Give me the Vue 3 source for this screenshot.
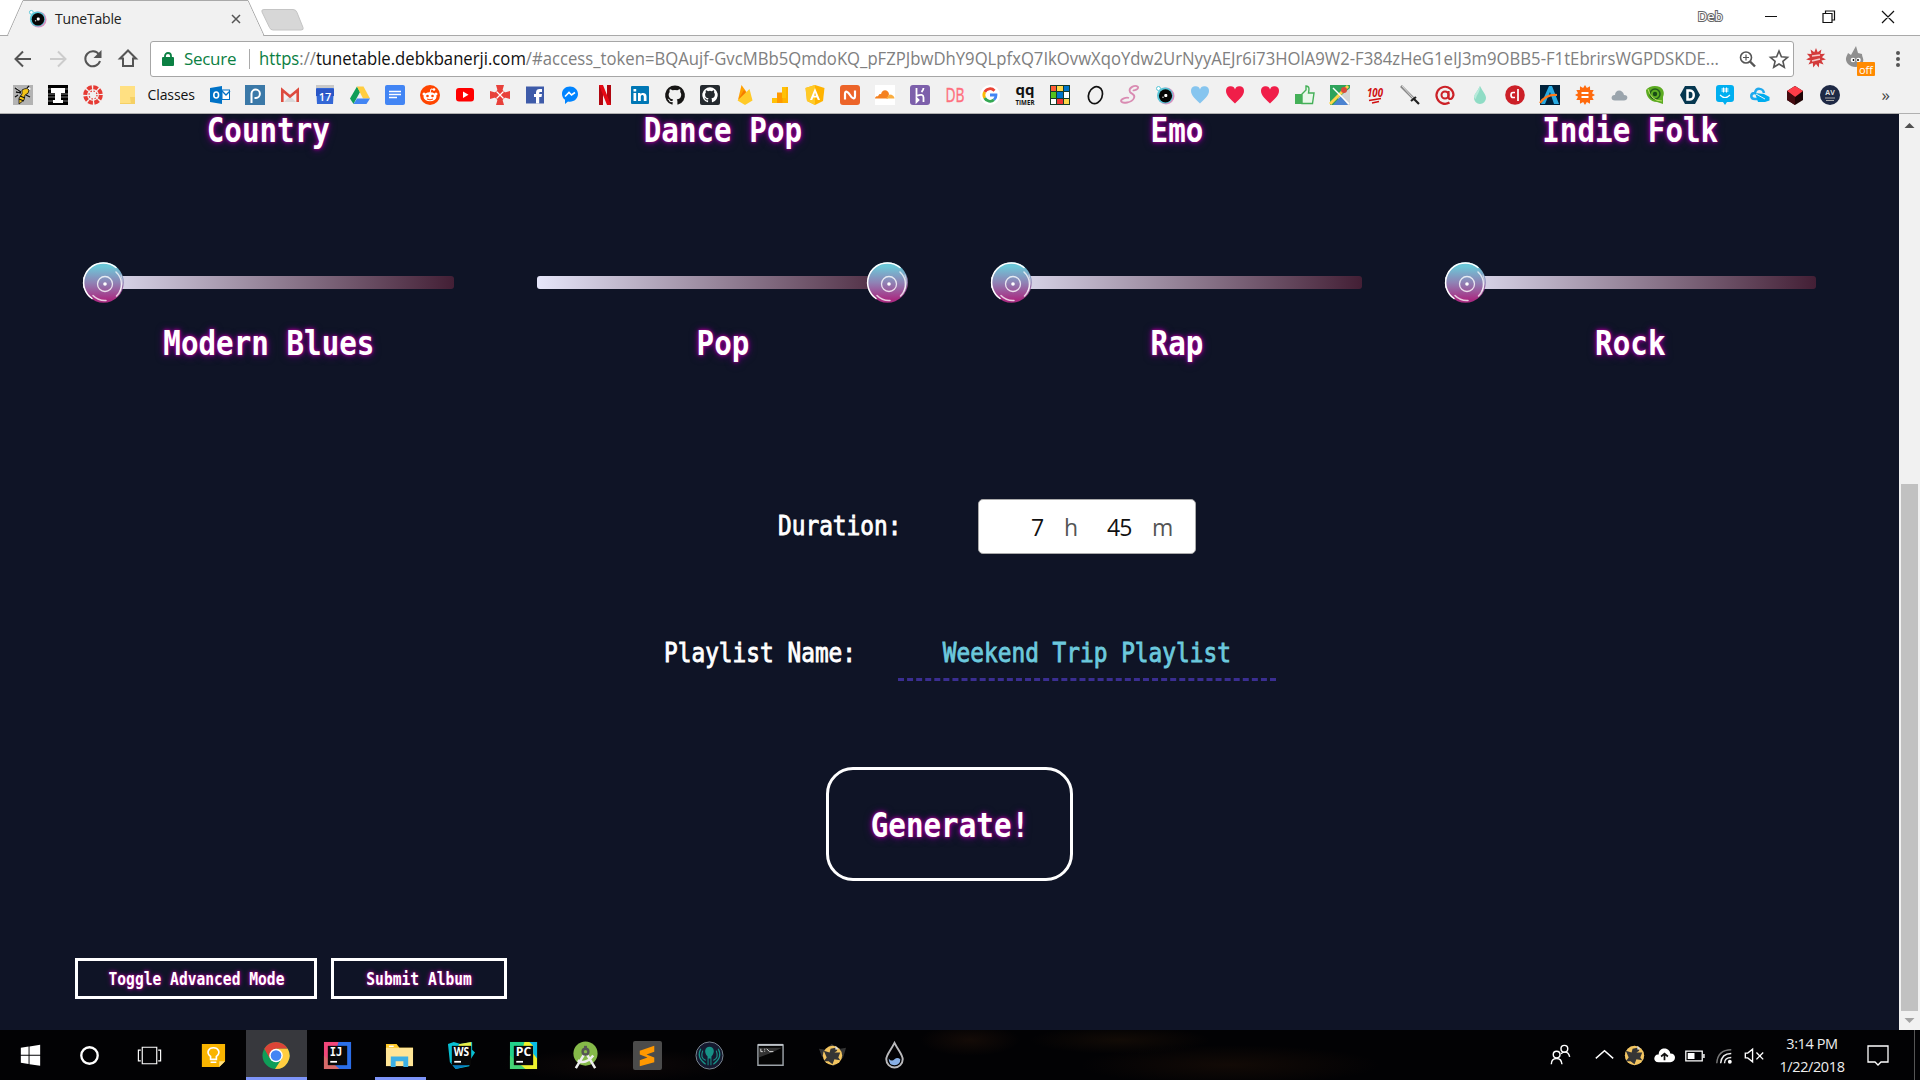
<script setup>
const heart = (c) => `<path fill="${c}" d="M10 18.500C6 14.500 1 10.500 1 6A4.600 4.600 0 0 1 10 4.500A4.600 4.600 0 0 1 19 6C19 10.500 14 14.500 10 18.500Z"/>`
const cat = (c) => `<path fill="${c}" d="M10 1.500a8.500 8.500 0 0 0-2.700 16.600c.4.1.6-.2.6-.5v-1.700c-2.400.5-2.900-1-2.900-1-.4-1-1-1.300-1-1.300-.8-.5.1-.5.1-.5.9.1 1.300.9 1.300.9.8 1.300 2 1 2.500.7.1-.5.300-.9.500-1.100-1.900-.2-3.900-1-3.900-4.200 0-1 .3-1.700.9-2.300-.1-.3-.4-1.100.1-2.300 0 0 .7-.2 2.300.9a8 8 0 0 1 4.300 0c1.600-1.100 2.300-.9 2.300-.9.5 1.200.2 2 .1 2.300.6.6.9 1.400.9 2.300 0 3.300-2 4-3.900 4.200.3.300.6.800.6 1.600v2.400c0 .3.200.6.600.5A8.500 8.500 0 0 0 10 1.500Z"/>`
const tune = `<circle cx="11" cy="11" r="8.500" fill="#d98fc0"/><circle cx="10" cy="10.500" r="8" fill="#58c7d8"/><circle cx="10.500" cy="10.800" r="6.600" fill="#050505"/><circle cx="3.500" cy="3.500" r="2" fill="#fff" stroke="#58c7d8"/><rect x="9.300" y="9" width="3" height="3" rx="1" fill="#fff"/><circle cx="8" cy="12.300" r=".8" fill="#ccc"/>`
const spikes = (n, r1, r2) => Array.from({ length: n * 2 }, (_, i) => {
  const a = (i * Math.PI) / n, r = i % 2 ? r2 : r1
  return `${(10 + r * Math.sin(a)).toFixed(2)},${(10 - r * Math.cos(a)).toFixed(2)}`
}).join(' ')

const leading = [
  `<path fill="#b3b3b3" d="M0 0h20v20H0z"/><path fill="#f2f2f2" d="M3 2l7 6-5 1zM15 1l3 3-6 4z"/><path fill="#f5c518" stroke="#111" stroke-width=".8" d="M9 5q5-3 7 0 0 4-4 5l-1 5-5 4 0-6 3-4z"/><path stroke="#111" stroke-width="1.300" d="M2 3l6 4M3 7l5 1M7 11l5 2M6 14l5 2M14 3l2-2M13 10l4 2M5 10l-3 2"/>`,
  `<path fill="#000" d="M0 0h20v20H0z"/><path stroke="#777" stroke-width="1" d="M0 4h20M0 9h20M0 12h20M0 16h20"/><path fill="#fff" d="M3 3h14v5h-4v7h2v3H5v-3h2V8H3z"/>`,
  `<circle cx="10" cy="10" r="7.800" fill="none" stroke="#e63b34" stroke-width="4" stroke-dasharray="4.700 1.430"/><circle cx="10" cy="10" r="4" fill="none" stroke="#e63b34" stroke-width="1.300" stroke-dasharray="1.400 1.750"/>`,
  `<path fill="#ffe082" d="M2 1h15v18H2z"/><path fill="#f5d064" d="M12 12h5v7h-4zM2 18h11v1H2z"/>`
]

const bookmarks = [
  `<path fill="#0072c6" d="M0 3l12-2v18L0 17z"/><rect x="12" y="5" width="7.500" height="9.500" fill="#fff" stroke="#0072c6"/><path d="M12 6l4 4 4-4" fill="none" stroke="#0072c6" stroke-width="1.300"/><ellipse cx="6.200" cy="10" rx="2.400" ry="3" fill="none" stroke="#fff" stroke-width="1.600"/>`,
  `<path fill="#3b79a8" d="M0 0h20v20H0z"/><path d="M6.500 18V8.500a4.200 4.200 0 1 1 4.500 4.500H9.500" fill="none" stroke="#fff" stroke-width="2"/>`,
  `<path fill="#f2f2f2" d="M2 4h16v13H2z"/><path fill="#d9d9d9" d="M4 17l6-6 6 6z"/><path d="M2.300 17V5L10 11.500 17.700 5v12" fill="none" stroke="#dd4b3e" stroke-width="2.600"/>`,
  `<path fill="#3367d6" d="M1 1h18l-1 18H2z"/><path fill="#c8c8c8" d="M1 0h18v3H1z"/><path fill="#2a56c6" d="M1 4h18v7H1z"/><text x="10" y="15.500" font-size="11" font-weight="600" fill="#fff" text-anchor="middle">17</text>`,
  `<path fill="#0f9d58" d="M7 1.500L0 13.500l3.500 5.500L10 7z"/><path fill="#ffcd40" d="M7 1.500h6.500l6.500 12h-7z"/><path fill="#4285f4" d="M7 13.500h13L16.500 19h-13z"/>`,
  `<rect width="20" height="20" rx="2" fill="#4285f4"/><path stroke="#fff" stroke-width="1.500" d="M4 6.500h12M4 9.500h12M4 12.500h8"/>`,
  `<circle cx="10" cy="10" r="10" fill="#ff4500"/><ellipse cx="10" cy="11.800" rx="6.500" ry="4.500" fill="#fff"/><circle cx="4" cy="9" r="1.500" fill="#fff"/><circle cx="16" cy="9" r="1.500" fill="#fff"/><circle cx="14" cy="4.500" r="1.300" fill="#fff"/><path d="M10 8l1-4 3 .5" fill="none" stroke="#fff"/><circle cx="7.500" cy="11" r="1.300" fill="#ff4500"/><circle cx="12.500" cy="11" r="1.300" fill="#ff4500"/><path d="M7 14q3 1.600 6 0" fill="none" stroke="#ff4500"/>`,
  `<rect x="1" y="3" width="18" height="13.500" rx="3" fill="#f00"/><path fill="#fff" d="M8 6.500l5.500 3.300L8 13z"/>`,
  `<g fill="#e8413a"><path d="M6 0h8l-2 7H8zM6 20h8l-2-7H8zM0 6v8l7-2V8zM20 6v8l-7-2V8z"/><path d="M10 2.500l7.500 7.500-7.500 7.500L2.500 10z"/></g><path stroke="#fff" stroke-width="1.200" d="M6.500 6.500l7 7M13.500 6.500l-7 7"/>`,
  `<path fill="#3e5ba9" d="M1 1.500h18v17H1z"/><path fill="#fff" d="M11 18.500V12H9V9h2V7.500C11 5 12.500 4 14.500 4H17v3h-1.500c-1 0-1.300.4-1.300 1.200V9H17l-.5 3h-2.300v6.500z"/>`,
  `<path fill="#0084ff" d="M10 1.500c-5 0-8 3.300-8 7.500 0 2.500 1.200 4.500 3 5.800V19l3-2.500c5.500 1 10-2.500 10-7.500 0-4.200-3.500-7.500-8-7.500z"/><path d="M5 11.500l4-4 2.500 2.500L15 7.500" fill="none" stroke="#fff" stroke-width="1.600"/>`,
  `<path fill="#b00710" d="M4 0h4v20H4zM12 0h4v20h-4z"/><path fill="#e50914" d="M4 0h4l8 20h-4z"/>`,
  `<rect x="1" y="1" width="18" height="18" rx="1" fill="#0077b5"/><path fill="#fff" d="M3.500 8h2.700v8H3.500zM3.500 4h2.700v2.500H3.500zM8 8h2.500v1.200c1-1.900 6-2 6 2V16h-2.700v-4.300c0-2.200-3-2-3 0V16H8z"/>`,
  `<g transform="translate(-1.500 -1.200) scale(1.150)">${cat('#161514')}</g>`,
  `<rect width="20" height="20" rx="2" fill="#24292e"/><g transform="translate(1 1) scale(.9)">${cat('#fff')}</g>`,
  `<path fill="#ffa000" d="M3 15L6.500 0l5 7z"/><path fill="#f57c00" d="M3 15l6-10 3 4z"/><path fill="#ffca28" d="M2.500 15.500L14.500 4l3 11.500L10 20z"/>`,
  `<path fill="#ffb300" d="M12 2h6v16h-6z"/><path fill="#ff9800" d="M7 7.500h5.500V18H7z"/><path fill="#ffc107" d="M2 13h5v5H2zM12 2h4v11h-4z"/>`,
  `<path fill="#ffb300" d="M10 0l9.500 3-1.500 13-8 4-8-4L.5 3z"/><path fill="#ffca28" d="M10 0v20l-8-4L.5 3z"/><path fill="#fff" fill-rule="evenodd" d="M10 3l5 12h-2.200l-1-2.500H8.200l-1 2.500H5zm0 4.500L9 10.700h2z"/>`,
  `<rect width="20" height="20" rx="3" fill="#ec6429"/><path d="M5 14.500V9c0-4 3-2.500 5 1s5 5 5 1V5.500" fill="none" stroke="#fff" stroke-width="2.200"/>`,
  `<path fill="#fff" d="M0 0h20v20H0z"/><path fill="#f48120" d="M0 13.500c0-2 2-2.500 3-2.200C4 9 5 8.800 6 9.200 7 4 13 4 14 9l-1 4.500z"/><path fill="#faad3f" d="M11 13.500l3.500-4c3 0 5 2 5 4z"/>`,
  `<rect width="20" height="20" rx="3" fill="#7d60ab"/><path d="M6.500 3v8q7-3 7 1.500V17M13.500 3q0 2-2 4M6.500 17v-4l2 2z" fill="none" stroke="#fff" stroke-width="1.800"/>`,
  `<text x="10" y="17" font-size="20" fill="#ff6f7d" stroke="#ff6f7d" stroke-width=".4" text-anchor="middle" textLength="19" lengthAdjust="spacingAndGlyphs">DB</text>`,
  `<circle cx="10" cy="10" r="10" fill="#fff"/><g fill="none" stroke-width="2.800"><path stroke="#ea4335" d="M14.500 5.700A6 6 0 0 0 4.700 7"/><path stroke="#fbbc05" d="M4.700 7a6 6 0 0 0 0 6"/><path stroke="#34a853" d="M4.700 13a6 6 0 0 0 9.300 1.800"/><path stroke="#4285f4" d="M14 14.800A6 6 0 0 0 16 10h-6"/></g>`,
  `<text x="10" y="10" font-size="15" font-weight="700" fill="#111" text-anchor="middle">qq</text><text x="10" y="19.500" font-size="6.500" font-weight="700" fill="#111" text-anchor="middle" textLength="19" lengthAdjust="spacingAndGlyphs">TIMER</text>`,
  `<path fill="#163b2a" d="M0 0h20v20H0z"/><path fill="#ff5c35" d="M1 1h5v5H1z"/><path fill="#ffd84a" d="M7 1h6v5H7zM14 14h5v5h-5z"/><path fill="#0074c8" d="M14 1h5v5h-5zM7 7h6v6H7z"/><path fill="#55c21c" d="M1 7h5v6H1z"/><path fill="#fff" d="M14 7h5v6h-5zM1 14h5v5H1z"/><path fill="#e33" d="M7 14h6v5H7z"/>`,
  `<ellipse cx="10.500" cy="10" rx="6.800" ry="8.700" fill="none" stroke="#111" stroke-width="1.700" transform="rotate(22 10 10)"/>`,
  `<path d="M13 5c1 1 6-1 5-3-3-3-10 1-8 5 1 2 6 2 4 6-2 5-12 6-13 3 0-2 5-4 8-3" fill="none" stroke="#d98bb2" stroke-width="1.800"/>`,
  tune, heart('#86c5ef'), heart('#f01e49'), heart('#f01e49'),
  `<path fill="#44b058" d="M0 9h7v10H0z"/><path d="M7 9l4-4V1c4 0 3 4 2.500 7H19l-1.500 10.500H7z" fill="#e9f7ea" stroke="#44b058" stroke-width="1.400"/>`,
  `<path fill="#2fa35b" d="M0 0h20v20H0z"/><path fill="#d5d5d5" d="M20 3v17H13L8 13z"/><path fill="#4b83d1" d="M3 20l8-9 7 9z"/><path d="M0 19L18 1" stroke="#ffd54a" stroke-width="3"/><path d="M3 3l16 16" stroke="#fff" stroke-width="1.500"/><circle cx="14" cy="5" r="3" fill="#d94a39"/>`,
  `<text x="10" y="11.500" font-size="13" font-style="italic" font-weight="700" fill="#d01012" text-anchor="middle" textLength="16" lengthAdjust="spacingAndGlyphs">100</text><path d="M4 15.500l12-2M7 18l7-1.500" stroke="#d01012" stroke-width="1.500"/>`,
  `<path d="M1 1l13 13" stroke="#888" stroke-width="2.600"/><path d="M2 1l11 12" stroke="#ddd"/><path d="M11 16l5-4M14 14l5 5" stroke="#222" stroke-width="2.200"/>`,
  `<circle cx="10" cy="10" r="3.500" fill="none" stroke="#cc2228" stroke-width="2"/><path d="M13.500 6v6q0 2 2 2t3-4a8.500 8.500 0 1 0-4 7.500" fill="none" stroke="#cc2228" stroke-width="2.200"/>`,
  `<path fill="#8fdcc5" d="M10 1c3 6 6 8.500 6 12a6 6 0 0 1-12 0c0-3.500 3-6 6-12z"/><path fill="#b8eadb" d="M10 1c0 7-4 9-4 13a5 5 0 0 1-2-2c0-3 4-6 6-11z"/>`,
  `<circle cx="10" cy="10" r="9.800" fill="#cc2028"/><path d="M10 7.500H8q-2 0-2 2.500t2 2.500h2M13 4v12" fill="none" stroke="#fff" stroke-width="1.700"/>`,
  `<path fill="#00213a" d="M0 0h20v20H0z"/><path fill="#29abe2" d="M9 1h3l7 18h-5l-4-12-5 12H1z"/><path d="M0 18q6-9 17-8" fill="none" stroke="#ff7a1a" stroke-width="2.200"/>`,
  `<polygon points="${spikes(12, 10, 7.2)}" fill="#ff6a0d"/><path d="M6.500 8h7M6.500 12h7" stroke="#fff" stroke-width="1.800"/>`,
  `<path fill="#9ba5ad" d="M5 15.500c-5 0-4-6 0-5.500 0-6 8-6 9 0 5 0 4 5.500 0 5.500z"/>`,
  `<path fill="#5cab22" d="M1 5c3-4 9-5 14-3 5 3 4 8 3 10v7l-6-2C5 17 1 11 1 5z"/><circle cx="10" cy="9" r="5" fill="none" stroke="#225c1c" stroke-width="1.500"/><circle cx="10" cy="9" r="2.200" fill="#184b17"/><path d="M3 4q3 12 14 12" fill="none" stroke="#bde36a"/>`,
  `<path fill="#063750" d="M5 1h10l5 9-5 9H5L0 10z"/><path d="M7.500 5.500H10c5 0 5 9 0 9H7.500z" fill="none" stroke="#fff" stroke-width="2.500"/>`,
  `<path fill="#00aff0" d="M4 0h12q3 0 3 3v11q0 3-3 3h-4l-2 3-2-3H4q-3 0-3-3V3q0-3 3-3z"/><path d="M8.500 2.500v5M11.500 2.500v5M6.500 4h7M6.500 6h7M5 10q5 5 10 0" fill="none" stroke="#fff" stroke-width="1.100"/>`,
  `<path d="M9 14H5C0 14 0 8 5 8c1-6 8-5 9 0" fill="none" stroke="#20a9ed" stroke-width="2.500"/><path fill="#00adef" d="M5 8l9 1 5.500 3v3.500L15 17H8z"/><path d="M6 9l9 5" stroke="#f1f1f1"/>`,
  `<path fill="#1f0506" d="M2 6l8-5 8 5v9l-8 5-8-5z"/><path fill="#ff3d48" d="M2 6l8-5 8 5-8 6z"/><path fill="#450b10" d="M2 6l8 6v8l-8-5z"/>`,
  `<circle cx="10" cy="10" r="10" fill="#1e2945"/><text x="10" y="10" font-size="7" font-weight="700" fill="#ddd" text-anchor="middle">AV</text><path d="M5 13h10M6 15.500h8" stroke="#aaa"/>`
]

const jet = (a, b, c) => `<path fill="${a}" d="M1 1h28v28H1z"/><path fill="${b}" d="M16 1h13v28H8z"/><path fill="${c}" d="M1 15l16 14H1z"/><path fill="#080808" d="M5 5h20v20H5z"/>`
const label = (t, w = 16, f = '') => `<text x="7" y="16" font-size="12" font-weight="700" ${f} fill="#fff" textLength="${w}" lengthAdjust="spacingAndGlyphs">${t}</text><path d="M7.500 21.500h7" stroke="#fff" stroke-width="1.800"/>`
const bird = `<circle cx="15" cy="15" r="10" fill="#f3c560"/><path fill="#353535" d="M6 10l6 2 1-4 5-1 2 3-3 2 6 0-2 5 2 3-6-1-2 5-4-3-5 0 3-4z"/><path fill="#ddd" d="M18 5l3 3-3 1z"/>`

const apps = [
  { w: 60, svg: `<path fill="#fff" d="M5 7l8-1.200V14.300H5zM14 5.600l11-1.600v10.300H14zM5 15.300h8v8.500L5 22.600zM14 15.300h11V25.500L14 24z"/>` },
  { w: 59, svg: `<circle cx="15" cy="15" r="8.500" fill="none" stroke="#fff" stroke-width="2.400"/>` },
  { w: 60, svg: `<path d="M7.500 6.500h15v17h-15zM6 9.500H3.500v11H6M24 9.500h2.500v11H24" fill="none" stroke="#fff" stroke-width="1.200"/>` },
  { w: 67, svg: `<path fill="#f9b400" d="M4 3h24v18l-6 6H4z"/><path fill="#ffe082" d="M22 27v-6h6z"/><path d="M13 19v-3c-5-4-2-9 3-9s8 5 3 9v3zM13 22h6" fill="none" stroke="#fff" stroke-width="1.700"/>` },
  { w: 61, active: true, svg: `<circle cx="14.500" cy="15" r="14" fill="#0f9d58"/><path fill="#db4437" d="M2.400 8A14 14 0 0 1 26.600 8H14.500v9H7.500z"/><path fill="#ffcd40" d="M14.500 8h12.100A14 14 0 0 1 13.500 29l7-11z"/><circle cx="14.500" cy="15" r="7" fill="#fff"/><circle cx="14.500" cy="15" r="5.500" fill="#4285f4"/>` },
  { w: 61, svg: jet('#f2477a', '#2b6fe8', '#d76a6a') + label('IJ', 13, 'font-family="DejaVu Sans Mono"') },
  { w: 62, open: true, svg: `<path fill="#ffc928" d="M1 3h11l3 4h14v6H1z"/><path fill="#ffe596" d="M1 7h28v19H1z"/><path fill="#3cb0e5" d="M6 27V16h18v11h-5v-6h-8v6z"/><path stroke="#fff" stroke-width="1.500" d="M4 5.500h5"/>` },
  { w: 62, svg: `<path fill="#08bfd2" d="M1 3l6-2 7 2 12-2v8l3 3-4 6-2 8-14 3-6-7z"/><path fill="#e8ee48" d="M13 3l12-2v5H11z"/><path fill="#087cbf" d="M4 22l7-2 12 5-14 4z"/><path fill="#080808" d="M5 5h20v20H5z"/>` + label('WS') },
  { w: 62, svg: jet('#22d28a', '#eef22d', '#46d475') + `<path fill="#08bce6" d="M21 1h8v17l-4-5V5z"/>` + label('PC') },
  { w: 62, svg: `<circle cx="15" cy="13" r="12.500" fill="#85b949"/><path d="M14 13L5 28M16 13l9 15M7 20q8 5 16-5" fill="none" stroke="#eee" stroke-width="2.600"/><circle cx="15" cy="11" r="3" fill="none" stroke="#555" stroke-width="2.500"/><path d="M15 5v4" stroke="#555" stroke-width="3"/>` },
  { w: 62, svg: `<rect width="30" height="30" rx="2" fill="#4b4b4b"/><path fill="#ff9800" d="M7 10l15-5v6l-8 3 8 3v5L7 26v-6l8-3-8-3z"/>` },
  { w: 62, svg: `<circle cx="15" cy="15" r="14" fill="#151a30" stroke="#7c8993"/><path fill="#179287" d="M15 6c-5 0-6 6-2 10v9h1v-7h2v7h1v-9c4-4 3-10-2-10z"/><path d="M6 8q-5 9 5 16M24 8q5 9-5 16M8 10q-3 8 3 10M22 10q3 8-3 10" fill="none" stroke="#179287" stroke-width="1.200"/>` },
  { w: 61, svg: `<path fill="#050505" stroke="#9ca2a8" stroke-width="1.500" d="M2 4h26v21H2z"/><path fill="#333" d="M3 7h24L14 13l-11 4z"/><path stroke="#bdc2c8" stroke-width="2" d="M2 4h26"/><path d="M5 8v3h2M9 8v1M9 10v1M11 8l3 3h4" fill="none" stroke="#ddd"/>` },
  { w: 62, svg: `<path fill="#343434" d="M1 8l7 1 6-6 9 5 6-1-3 10-10 9L4 16z"/>` + bird },
  { w: 62, svg: `<path d="M15 2c4 8 8.500 12 8.500 17a8.500 8.500 0 0 1-17 0C6.500 14 11 10 15 2z" fill="none" stroke="#b9b9bc" stroke-width="2"/><path fill="#88afe5" d="M9 18q3 4 6 1t6 0q0 6-6 6t-6-7z"/>` }
]

const tray = [
  { w: 60, svg: `<g fill="none" stroke="#fff" stroke-width="1.500"><circle cx="11" cy="14" r="3.500"/><path d="M5.500 24q0-6 5.500-6 5 0 5.500 6"/><circle cx="19" cy="8" r="3.500"/><path d="M15.500 13q2-1.500 4-1.500 4 0 5 5"/></g>` },
  { w: 29, svg: `<path d="M6 18l9-8 9 8" fill="none" stroke="#fff" stroke-width="1.500"/>` },
  { w: 30, svg: `<circle cx="15" cy="15" r="10" fill="#555"/>` + bird },
  { w: 30, svg: `<path fill="#fff" d="M9 22C2 22 4 13 9 14c0-8 11-8 12-1 7 0 6 9 0 9z"/><path d="M15 20v-6M11.500 16l3.500-3 3.500 3" fill="none" stroke="#111" stroke-width="1.800"/>` },
  { w: 30, svg: `<path d="M6 10.500h17v10H6z" fill="none" stroke="#fff" stroke-width="1.300"/><path fill="#fff" d="M8 12.500h7v6H8zM24 13.500h1.500v4H24z"/>` },
  { w: 31, svg: `<g fill="none" stroke-width="1.500"><path stroke="#777" d="M7 23Q8 9 22 9"/><path stroke="#eee" d="M11 23q1-10 11-10M15 23q0-6 7-6"/></g><circle cx="20.500" cy="21.500" r="2" fill="#fff"/>` },
  { w: 28, svg: `<path d="M5.500 12.500H8l5-4v13l-5-4H5.500zM17 12l7 7M24 12l-7 7" fill="none" stroke="#fff" stroke-width="1.400"/>` }
]

const topGenres = ['Country', 'Dance Pop', 'Emo', 'Indie Folk']
const genres = [
  { name: 'Modern Blues', value: 0 },
  { name: 'Pop', value: 100 },
  { name: 'Rap', value: 0 },
  { name: 'Rock', value: 0 }
]
const query = '/#access_token=BQAujf-GvcMBb5QmdoKQ_pFZPJbwDhY9QLpfxQ7IkOvwXqoYdw2UrNyyAEJr6i73HOlA9W2-F384zHeG1eIJ3m9OBB5-F1tEbrirsWGPDSKDE...'
</script>

<template>
  <div class="screen">
    <header class="tabs">
      <svg class="tabshape" width="310" height="36" viewBox="0 0 310 36">
        <path d="M0 35.500H7.500L23 .5H248L264 35.500H310" fill="none" stroke="#a9a9a9" />
        <path d="M8 36L23.500 1H247.500L263.500 36z" fill="#f1f1f1" />
        <path d="M264 9.500h29q3 0 4 3l6 15q1 2.500-2 2.500H273q-2.500 0-3.500-2.500L262 12q-1-2.500 2-2.500z" fill="#d7d7d7" stroke="#c4c4c4" />
      </svg>
      <div class="tabbody">
        <svg class="fav" viewBox="0 0 20 20" v-html="tune"></svg>
        <span class="tabname">TuneTable</span>
        <svg class="tabclose" width="10" height="10" viewBox="0 0 10 10"><path d="M1 1l8 8M9 1L1 9" stroke="#555" stroke-width="1.500" /></svg>
      </div>
      <div class="window">
        <span class="deb">Deb</span>
        <svg width="180" height="36" viewBox="0 0 180 36" fill="none" stroke="#111" stroke-width="1.200">
          <path d="M25 16.500h12M83 13.500h9v9h-9zM85.500 13.500V11h9v9H92M142 11l12 12M154 11l-12 12" />
        </svg>
      </div>
    </header>

    <div class="toolbar">
      <svg class="nav" width="150" height="44" viewBox="0 0 150 44" fill="none" stroke="#555" stroke-width="2">
        <path d="M31 23H16M23 15.500L15.500 23l7.500 7.500" />
        <path stroke="#ccc" d="M50 23h15M58 15.500l7.500 7.500-7.500 7.500" />
        <path d="M99 18.500A7.500 7.500 0 1 0 100 25" /><path fill="#555" stroke="none" d="M101.500 14v8h-8z" />
        <path d="M120 22.500l8-8 8 8h-3V30h-10v-7.500z" />
      </svg>
      <div class="omnibox">
        <svg class="lock" width="12" height="16" viewBox="0 0 12 16"><path d="M3 7V5a3 3 0 0 1 6 0v2" fill="none" stroke="#0b8043" stroke-width="1.800" /><rect y="6" width="12" height="9" rx="1" fill="#0b8043" /></svg>
        <span class="secure">Secure</span>
        <i class="bar"></i>
        <svg class="url" width="1464" height="34">
          <text x="0" y="23" textLength="1460" lengthAdjust="spacingAndGlyphs"><tspan fill="#0b8043">https</tspan><tspan fill="#808080">://</tspan><tspan fill="#111">tunetable.debkbanerji.com</tspan><tspan fill="#808080">{{ query }}</tspan></text>
        </svg>
        <svg class="tools" width="60" height="32" viewBox="0 0 60 32" fill="none" stroke="#555" stroke-width="1.600">
          <circle cx="13" cy="14.500" r="5.500" /><path d="M17 18.500l5 5" stroke-width="2.400" /><path d="M10 14.500h6M13 11.500v6" stroke-width="1.200" />
          <path d="M46 8l2.400 5.800 6.100.5-4.600 4 1.400 6-5.300-3.300-5.300 3.300 1.400-6-4.600-4 6.100-.5z" />
        </svg>
      </div>
      <svg class="ext" width="126" height="44" viewBox="0 0 126 44">
        <g transform="translate(12 12)"><polygon :points="spikes(11, 10, 6)" fill="#d33b3b" /><path d="M6 8l8-1M6 13l8-2" stroke="#f6caca" stroke-width="1.700" /></g>
        <path fill="#8f8f8f" d="M54 28c-4-5-1-8 0-11l3 2 5-9 2 7 4 1c0 4 3 5 0 10-3 4-10 4-14 0z" /><circle cx="59" cy="24" r="2.300" fill="#fff" /><circle cx="64.500" cy="24" r="2.300" fill="#fff" /><circle cx="59.500" cy="24" r=".9" /><circle cx="64" cy="24" r=".9" />
        <rect x="63" y="26" width="18" height="14" rx="1" fill="#ff8a00" /><text x="72" y="37.500" font-size="11" fill="#fff" text-anchor="middle">off</text>
        <g fill="#555"><circle cx="104" cy="17" r="2" /><circle cx="104" cy="23" r="2" /><circle cx="104" cy="29" r="2" /></g>
      </svg>
    </div>

    <div class="bookmarks">
      <span v-for="(b, i) in leading" :key="'l' + i" class="bm"><svg viewBox="0 0 20 20" v-html="b"></svg></span>
      <span class="folder">Classes</span>
      <span v-for="(b, i) in bookmarks" :key="i" class="bm"><svg viewBox="0 0 20 20" v-html="b"></svg></span>
      <span class="more">»</span>
    </div>

    <div class="body">
      <main class="page">
        <div class="genres top">
          <div v-for="g in topGenres" :key="g" class="genre"><span class="pix big">{{ g }}</span></div>
        </div>
        <div class="genres">
          <div v-for="g in genres" :key="g.name" class="genre">
            <div class="slider" :class="{ full: g.value === 100 }">
              <div class="track"></div>
              <svg class="disc" width="41" height="41" viewBox="0 0 41 41">
                <defs><linearGradient id="disc" x1="0" y1="0" x2="0" y2="1"><stop offset=".1" stop-color="#6cc8d8" /><stop offset=".5" stop-color="#8f83b5" /><stop offset=".92" stop-color="#a92c82" /></linearGradient></defs>
                <circle cx="20.500" cy="20.500" r="20.300" fill="url(#disc)" />
                <g fill="none" stroke="#fff" stroke-linecap="round">
                  <path d="M9 36.500A19.500 19.500 0 0 1 20.500 1A19.500 19.500 0 0 1 33 5.500" stroke-width="1.500" />
                  <path d="M33 10A16.500 16.500 0 0 1 33.500 34M10 33.500q5.500 5.500 13 5" stroke-width="1.500" opacity=".75" />
                  <path d="M38 13q3 8-1 16" stroke-width="1" opacity=".6" />
                  <circle cx="22" cy="22" r="7.500" stroke-width="1.300" opacity=".8" />
                </g>
                <circle cx="22" cy="22" r="1.800" fill="#fff" />
              </svg>
            </div>
            <span class="pix big">{{ g.name }}</span>
          </div>
        </div>

        <div class="row duration">
          <div class="lab durlab"><span class="pix mid">Duration:</span></div>
          <div class="time"><b class="hours">7</b><span class="h">h</span><b class="mins">45</b><span>m</span></div>
        </div>
        <div class="row playlist">
          <div class="lab playlab"><span class="pix mid">Playlist Name:</span></div>
          <div class="field"><span class="pix mid cyan">Weekend Trip Playlist</span></div>
        </div>
        <button class="generate"><span class="pix big">Generate!</span></button>
        <div class="actions">
          <button class="toggle"><span class="pix small">Toggle Advanced Mode</span></button>
          <button class="submit"><span class="pix small">Submit Album</span></button>
        </div>
      </main>
      <aside class="scroll">
        <svg width="21" height="24" viewBox="0 0 21 24"><path fill="#505050" d="M5.500 14l5-5 5 5z" /></svg>
        <div class="thumb"></div>
        <svg width="21" height="19" viewBox="0 0 21 19"><path fill="#a3a3a3" d="M5.500 7l5 5 5-5z" /></svg>
      </aside>
    </div>

    <footer class="taskbar">
      <span v-for="(a, i) in apps" :key="i" class="app" :class="{ active: a.active, open: a.open }" :style="{ width: a.w + 'px' }">
        <svg viewBox="0 0 30 30" v-html="a.svg"></svg>
      </span>
      <div class="tray">
        <span v-for="(t, i) in tray" :key="i" class="app" :style="{ width: t.w + 'px' }"><svg viewBox="0 0 30 30" v-html="t.svg"></svg></span>
        <div class="clock"><span>3:14 PM</span><span>1/22/2018</span></div>
        <svg class="note" width="22" height="22" viewBox="0 0 22 22"><path d="M1 2h20v16h-7l-3 3-3-3H1z" fill="none" stroke="#fff" stroke-width="1.300" /></svg>
        <i class="edge"></i>
      </div>
    </footer>
  </div>
</template>

<style>
body { margin: 0; overflow: hidden; }
</style>

<style scoped>
* { box-sizing: border-box; }
.screen { width: 1920px; height: 1080px; display: flex; flex-direction: column; overflow: hidden; font-family: "Open Sans", "Noto Sans", sans-serif; background: #0f1426; }
svg { display: block; flex: none; overflow: visible; font-family: "Open Sans", "Noto Sans", sans-serif; }
.tabs { height: 36px; flex: none; display: flex; background: #fff; position: relative; box-shadow: inset 0 -1px #a9a9a9; }
.tabshape { position: absolute; left: 0; top: 0; }
.tabbody { position: relative; width: 310px; display: flex; align-items: center; padding-left: 28px; }
.fav { width: 19px; height: 19px; }
.tabname { font-size: 14px; margin-left: 8px; width: 176px; letter-spacing: -.2px; color: #222; }
.tabclose { margin-top: 1px; }
.window { margin-left: auto; display: flex; align-items: center; }
.deb { font-size: 13px; line-height: 32px; color: #fff; -webkit-text-stroke: 2px #666; paint-order: stroke fill; margin-right: 17px; letter-spacing: .2px; margin-top: -4px; }
.toolbar { height: 44px; flex: none; background: #f1f1f1; display: flex; }
.omnibox { width: 1645px; height: 36px; margin-top: 5px; background: #fff; border: 1px solid #a6a6a6; border-radius: 3px; display: flex; align-items: center; padding-left: 11px; }
.secure { width: 65px; margin-left: 10px; font-size: 17px; letter-spacing: -.3px; color: #0b8043; line-height: 34px; }
.bar { width: 1px; height: 20px; background: #aaa; margin-right: 9px; }
.url { font-size: 18px; }
.tools { margin-left: 10px; }
.bookmarks { height: 34px; flex: none; background: #f1f1f1; border-bottom: 1px solid #b0b0b0; display: flex; align-items: center; padding: 0 0 4px 5.500px; }
.bm { width: 35px; flex: none; display: flex; justify-content: center; }
.bm svg { width: 20px; height: 20px; }
.folder { width: 57px; flex: none; font-size: 14px; padding-left: 2px; letter-spacing: -.1px; color: #111; }
.more { margin-left: 34px; font-size: 17px; color: #444; line-height: 20px; }
.body { height: 916px; flex: none; display: flex; }
.page { width: 1899px; height: 916px; overflow: hidden; display: flex; flex-direction: column; align-items: flex-start; background: #0f1426; padding-left: 83px; }
.genres { display: flex; gap: 83px; margin-top: 111px; }
.genres.top { margin-top: -6px; margin-bottom: -1px; }
.genre { width: 371px; display: flex; flex-direction: column; align-items: center; }
.slider { position: relative; width: 371px; height: 41px; margin-bottom: 18px; display: flex; align-items: center; }
.track { width: 100%; height: 13px; border-radius: 3px; background: linear-gradient(90deg, #e6e6fa, #431f35); }
.disc { position: absolute; left: 0; top: 0; }
.full .disc { left: auto; right: 0; }
.pix { display: block; font-family: "DejaVu Sans Mono", monospace; color: #fff; white-space: pre; }
.big { font-size: 34.300px; line-height: 44px; font-weight: 700; transform: scaleX(.852); text-shadow: 0 0 3px #b0008a, 0 0 6px #8a0090, 0 1px 9px #500070; }
.mid { font-size: 27.200px; line-height: 36px; transform: scaleX(.838); -webkit-text-stroke: .9px #fff; }
.cyan { color: #6cc9dd; -webkit-text-stroke-color: #6cc9dd; }
.small { font-size: 17.200px; line-height: 24px; transform: scaleX(.85); font-weight: 700; text-shadow: 0 0 3px #b0008a, 0 0 6px #8a0090; }
.row { display: flex; align-items: center; }
.duration { margin: 134px 0 0 695px; height: 55px; }
.lab { display: flex; }
.durlab { width: 200px; padding-bottom: 2px; }
.durlab .pix, .playlab .pix { transform-origin: left; }
.time { width: 218px; height: 55px; background: #fff; border: 1px solid #aaa; border-radius: 5px; display: flex; align-items: center; font-size: 23px; color: #555; letter-spacing: -.9px; }
.time b { font-weight: 400; color: #111; }
.hours { margin-left: 52px; width: 33px; }
.h { width: 43px; }
.mins { width: 45px; }
.playlist { margin: 80px 0 0 581px; height: 47px; align-items: flex-start; }
.playlab { width: 234px; padding-top: 1px; }
.field { width: 378px; height: 47px; padding-top: 1px; border-bottom: 3px dashed #3a2e91; display: flex; justify-content: center; }
button { background: transparent; border: 3px solid #fff; padding: 0; display: flex; align-items: center; justify-content: center; }
.generate { width: 247px; height: 114px; border-radius: 27px; margin: 86px 0 0 743px; padding-top: 2px; }
.actions { display: flex; gap: 14px; margin: 77px 0 0 -8px; }
.toggle { width: 242px; height: 41px; }
.submit { width: 176px; height: 41px; }
.scroll { width: 21px; background: #f1f1f1; display: flex; flex-direction: column; align-items: center; }
.thumb { width: 17px; height: 527px; margin-top: auto; background: #c1c1c1; }
.taskbar { height: 50px; flex: none; display: flex; background: radial-gradient(ellipse 50px 16px at 970px 10px, #140b07, transparent), radial-gradient(ellipse 90px 14px at 1120px 10px, #120b06, transparent), radial-gradient(ellipse 120px 16px at 620px 35px, #0e0808, transparent), radial-gradient(ellipse 150px 20px at 1230px 35px, #120a06, transparent), #020204; }
.app { height: 50px; flex: none; display: flex; align-items: center; justify-content: center; position: relative; }
.app svg { width: 29px; height: 29px; }
.active { background: #37383d; border-bottom: 3px solid #7d94f8; padding-top: 3px; }
.open::after { content: ""; position: absolute; left: 7px; bottom: 0; width: 51px; height: 3px; background: #7d94f8; }
.tray { margin-left: auto; display: flex; align-items: center; width: 390px; }
.clock { width: 88px; display: flex; flex-direction: column; align-items: center; font-size: 14.500px; line-height: 23px; color: #eee; letter-spacing: -.4px; white-space: nowrap; }
.note { margin-left: 11px; }
.edge { width: 1px; height: 50px; background: #555; margin-left: auto; margin-right: 5px; }
</style>
